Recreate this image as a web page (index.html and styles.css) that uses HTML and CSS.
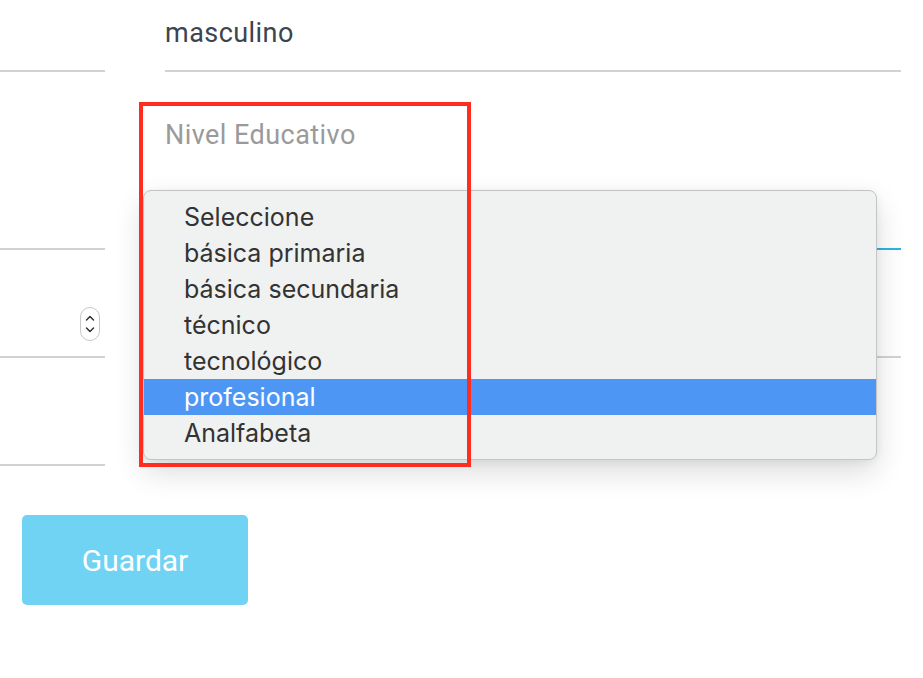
FILE: index.html
```html
<!DOCTYPE html>
<html lang="es">
<head>
<meta charset="utf-8">
<link rel="stylesheet" href="styles.css">
</head>
<body>
<div class="page">
  <div class="form">
    <div class="field left row1"></div>
    <div class="field right row1"><span class="value">masculino</span></div>

    <div class="field left row2"></div>
    <div class="field right row2 focused"><span class="label">Nivel Educativo</span></div>

    <div class="field left row3">
      <span class="stepper">
        <svg width="20" height="34" viewBox="0 0 20 34">
          <rect x="0.5" y="0.5" width="19" height="33" rx="9.5" fill="#fff" stroke="#c8c8c8"/>
          <path d="M6.5 13 L10 9.5 L13.5 13" fill="none" stroke="#333" stroke-width="1.5" stroke-linecap="round" stroke-linejoin="round"/>
          <path d="M6.5 21 L10 24.5 L13.5 21" fill="none" stroke="#333" stroke-width="1.5" stroke-linecap="round" stroke-linejoin="round"/>
        </svg>
      </span>
    </div>
    <div class="field right row3"></div>

    <div class="field left row4"></div>
    <div class="field right row4 noline"></div>
  </div>

  <div class="actions">
    <button class="btn">Guardar</button>
  </div>

  <ul class="menu">
    <li>Seleccione</li>
    <li>básica primaria</li>
    <li>básica secundaria</li>
    <li>técnico</li>
    <li>tecnológico</li>
    <li class="selected">profesional</li>
    <li>Analfabeta</li>
  </ul>

  <div class="annotation"></div>
</div>
</body>
</html>
```
FILE: styles.css
```css
html, body {
  margin: 0;
  padding: 0;
  background: #fff;
}
body {
  width: 923px;
  height: 678px;
  overflow: hidden;
  font-family: Roboto, "Liberation Sans", sans-serif;
}
.page {
  position: relative;
  width: 923px;
  height: 678px;
}
.form {
  display: grid;
  grid-template-columns: 105px 736px;
  column-gap: 60px;
  grid-template-rows: 72px 178px 108px 108px;
}
.field {
  border-bottom: 2px solid #d2d2d2;
  box-sizing: border-box;
  position: relative;
}
.field.focused {
  border-bottom-color: #29b6e0;
}
.field.noline {
  border-bottom-color: transparent;
}
.value {
  position: absolute;
  left: 0;
  top: 16px;
  font-size: 27px;
  line-height: 34px;
  letter-spacing: 0.45px;
  color: #3c4450;
}
.label {
  position: absolute;
  left: 0;
  top: 46px;
  font-size: 27px;
  line-height: 34px;
  letter-spacing: 0.45px;
  color: #9a9a9a;
}
.stepper {
  position: absolute;
  left: 80px;
  top: 57px;
  width: 20px;
  height: 34px;
  display: block;
}
.stepper svg {
  display: block;
}
.actions {
  padding: 49px 0 0 22px;
}
.btn {
  width: 226px;
  height: 90px;
  border: none;
  border-radius: 5px;
  background: #70d3f4;
  color: #fff;
  font-family: Roboto, "Liberation Sans", sans-serif;
  font-size: 30px;
  padding: 0;
}
.menu {
  position: absolute;
  left: 143px;
  top: 190px;
  width: 734px;
  margin: 0;
  padding: 8px 0;
  list-style: none;
  background: #f0f1f1;
  border: 1px solid #c4c4c4;
  border-radius: 8px;
  box-sizing: border-box;
  height: 270px;
  box-shadow: 0 12px 30px rgba(0, 0, 0, 0.14), 0 2px 8px rgba(0, 0, 0, 0.06);
  font-family: Inter, "Noto Sans", sans-serif;
  font-size: 25px;
  color: #333333;
}
.menu li {
  height: 36px;
  line-height: 36px;
  padding-left: 40px;
}
.menu li.selected {
  background: #4e96f4;
  color: #fff;
}
.annotation {
  position: absolute;
  left: 139px;
  top: 102px;
  width: 332px;
  height: 365px;
  border: 4px solid #ff2d20;
  box-sizing: border-box;
  pointer-events: none;
}
```
